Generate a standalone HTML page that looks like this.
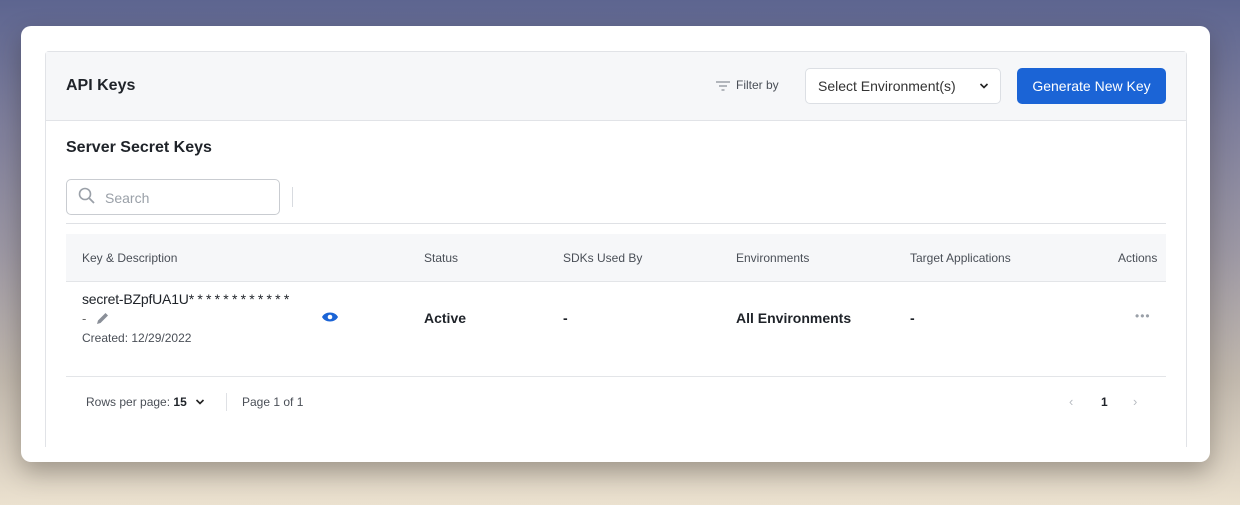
<!DOCTYPE html>
<html><head><meta charset="utf-8"><style>
*{margin:0;padding:0;box-sizing:border-box}
body{width:1240px;height:505px;overflow:hidden;position:relative;font-family:"Liberation Sans",sans-serif;color:#1f2329;
background:linear-gradient(180deg,#5d6590 0%,#7f7f9c 25%,#9d98a4 50%,#c1b8ad 75%,#ebe1cf 100%)}
.a{position:absolute;white-space:nowrap}
.card{position:absolute;left:21px;top:26px;width:1189px;height:436px;background:#fff;border-radius:10px;box-shadow:0 10px 25px rgba(40,35,30,.35);overflow:hidden}
.panel{position:absolute;left:24px;top:25px;width:1142px;height:396px;border:1px solid #e1e3e7;border-radius:4px 4px 0 0;border-bottom:none}
.hdr{position:absolute;left:0;top:0;right:0;height:69px;background:#f6f7f9;border-bottom:1px solid #e1e3e7}
</style></head><body>
<div class="card">
<div class="panel">
<div class="hdr"></div>
</div>
</div>
<div class="a" style="left:66px;top:77px;font-size:16px;font-weight:bold">API Keys</div>
<svg class="a" style="left:715px;top:80px" width="16" height="12"><path d="M1 2h14M4 6h8M6.5 10h3" stroke="#8a8f98" stroke-width="1.3"/></svg>
<div class="a" style="left:736px;top:78px;font-size:12px;color:#4a4f57">Filter by</div>
<div class="a" style="left:805px;top:68px;width:196px;height:36px;border:1px solid #dcdfe4;border-radius:5px;background:#fff"></div>
<div class="a" style="left:818px;top:78px;font-size:14px;color:#333">Select Environment(s)</div>
<svg class="a" style="left:979px;top:82px" width="10" height="8"><path d="M1.5 2l3.5 3.5L8.5 2" stroke="#222" stroke-width="1.6" fill="none"/></svg>
<div class="a" style="left:1017px;top:68px;width:149px;height:36px;background:#1b64d6;border-radius:5px;color:#fff;font-size:14px;text-align:center;line-height:36px">Generate New Key</div>
<div class="a" style="left:66px;top:139px;font-size:16px;font-weight:bold">Server Secret Keys</div>
<div class="a" style="left:66px;top:179px;width:214px;height:36px;border:1px solid #c9ccd1;border-radius:5px;background:#fff"></div>
<svg class="a" style="left:78px;top:187px" width="18" height="18"><circle cx="7" cy="7" r="5.5" stroke="#9aa0a8" stroke-width="1.6" fill="none"/><path d="M11 11l5 5" stroke="#9aa0a8" stroke-width="1.8"/></svg>
<div class="a" style="left:105px;top:190px;font-size:14px;color:#9aa0a8">Search</div>
<div class="a" style="left:292px;top:187px;width:1px;height:20px;background:#d8dbe0"></div>
<div class="a" style="left:66px;top:223px;width:1100px;height:1px;background:#dfe1e5"></div>
<div class="a" style="left:66px;top:234px;width:1100px;height:48px;background:#f6f7f9;border-bottom:1px solid #e3e5e8"></div>
<div class="a" style="left:82px;top:251px;font-size:12px;color:#4a4f57">Key &amp; Description</div>
<div class="a" style="left:424px;top:251px;font-size:12px;color:#4a4f57">Status</div>
<div class="a" style="left:563px;top:251px;font-size:12px;color:#4a4f57">SDKs Used By</div>
<div class="a" style="left:736px;top:251px;font-size:12px;color:#4a4f57">Environments</div>
<div class="a" style="left:910px;top:251px;font-size:12px;color:#4a4f57">Target Applications</div>
<div class="a" style="left:1118px;top:251px;font-size:12px;color:#4a4f57">Actions</div>
<div class="a" style="left:82px;top:291px;font-size:14px;color:#1f2329;letter-spacing:-0.2px">secret-BZpfUA1U<span style="letter-spacing:3.2px">************</span></div>
<div class="a" style="left:82px;top:311px;font-size:13px;color:#666">-</div>
<svg class="a" style="left:95px;top:311px" width="15" height="15"><path d="M2 13l1-3.5L10.5 2l2.5 2.5L5.5 12z" fill="#8a8f98"/></svg>
<div class="a" style="left:82px;top:331px;font-size:12px;color:#4a4f57">Created: 12/29/2022</div>
<svg class="a" style="left:321px;top:311px" width="18" height="12"><path d="M1 6C4 0 14 0 17 6C14 12 4 12 1 6z" fill="#1b64d6"/><circle cx="9" cy="6" r="2.3" fill="#fff"/></svg>
<div class="a" style="left:424px;top:310px;font-size:14px;font-weight:bold">Active</div>
<div class="a" style="left:563px;top:310px;font-size:14px;font-weight:bold">-</div>
<div class="a" style="left:736px;top:310px;font-size:14px;font-weight:bold">All Environments</div>
<div class="a" style="left:910px;top:310px;font-size:14px;font-weight:bold">-</div>
<div class="a" style="left:1135px;top:309px;font-size:12px;color:#9aa0a8;letter-spacing:1px">•••</div>
<div class="a" style="left:66px;top:376px;width:1100px;height:1px;background:#e3e5e8"></div>
<div class="a" style="left:86px;top:395px;font-size:12px;color:#4a4f57">Rows per page: <b style="color:#1f2329">15</b></div>
<svg class="a" style="left:195px;top:398px" width="10" height="8"><path d="M1.5 2l3.5 3.5L8.5 2" stroke="#222" stroke-width="1.6" fill="none"/></svg>
<div class="a" style="left:226px;top:393px;width:1px;height:18px;background:#dfe1e5"></div>
<div class="a" style="left:242px;top:395px;font-size:12px;color:#4a4f57">Page 1 of 1</div>
<div class="a" style="left:1069px;top:394px;font-size:13px;color:#b8bcc2">‹</div>
<div class="a" style="left:1101px;top:395px;font-size:12px;font-weight:bold">1</div>
<div class="a" style="left:1133px;top:394px;font-size:13px;color:#b8bcc2">›</div>
</body></html>
